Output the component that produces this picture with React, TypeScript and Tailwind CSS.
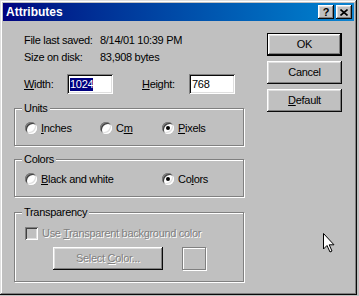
import type { ReactNode } from "react";

const bevel =
  "shadow-[inset_-1px_-1px_0_#0a0a0a,inset_1px_1px_0_#ffffff,inset_-2px_-2px_0_#808080,inset_2px_2px_0_#dfdfdf]";
const sunken =
  "shadow-[inset_1px_1px_0_#808080,inset_-1px_-1px_0_#ffffff,inset_2px_2px_0_#0a0a0a,inset_-2px_-2px_0_#dfdfdf]";
const disabledText = "text-[#808080] [text-shadow:1px_1px_0_#ffffff]";

function CaptionButton({ children }: { children: ReactNode }) {
  return (
    <div className={`flex h-[14px] w-[16px] items-center justify-center bg-[#c0c0c0] text-[11px] font-bold leading-none text-black ${bevel}`}>
      {children}
    </div>
  );
}

function Button({ children, isDefault, disabled, className = "" }: { children: ReactNode; isDefault?: boolean; disabled?: boolean; className?: string }) {
  return (
    <div className={`h-[23px] ${isDefault ? "border border-black" : ""} ${className}`}>
      <div className={`flex h-full w-full items-center justify-center bg-[#c0c0c0] ${bevel} ${disabled ? disabledText : ""}`}>
        <span>{children}</span>
      </div>
    </div>
  );
}

function Field({ children, selected }: { children: ReactNode; selected?: boolean }) {
  return (
    <div className={`flex h-[20px] w-[46px] items-center bg-white pl-[3px] ${sunken}`}>
      <span className={selected ? "bg-[#000080] text-white" : ""}>{children}</span>
    </div>
  );
}

function Radio({ checked }: { checked?: boolean }) {
  return (
    <span className="flex size-[12px] shrink-0 items-center justify-center rounded-full bg-white shadow-[inset_1px_1px_0_#808080,inset_-1px_-1px_0_#ffffff,inset_2px_2px_0_#404040,inset_-2px_-2px_0_#dfdfdf]">
      {checked && <span className="size-[4px] rounded-full bg-black" />}
    </span>
  );
}

function Option({ children, checked, className = "" }: { children: ReactNode; checked?: boolean; className?: string }) {
  return (
    <div className={`flex items-center gap-[4px] ${className}`}>
      <Radio checked={checked} />
      <span>{children}</span>
    </div>
  );
}

function Group({ label, className = "", children }: { label: string; className?: string; children: ReactNode }) {
  return (
    <div className={`border border-[#808080] shadow-[1px_1px_0_#ffffff,inset_1px_1px_0_#ffffff] ${className}`}>
      <div className="-mt-[7px] ml-[7px] w-fit bg-[#c0c0c0] px-[2px] leading-[13px]">{label}</div>
      {children}
    </div>
  );
}

export default function App() {
  return (
    <div className="relative h-[296px] w-[359px] bg-[#c0c0c0] font-['Liberation_Sans',Arial,sans-serif] text-[11px] leading-[13px] tracking-[-0.3px] text-black">
      <div className="h-[295px] w-[357px] p-[3px] shadow-[inset_-1px_-1px_0_#0a0a0a,inset_1px_1px_0_#dfdfdf,inset_-2px_-2px_0_#808080,inset_2px_2px_0_#ffffff]">
        {/* title bar */}
        <div className="flex h-[18px] items-center justify-between bg-gradient-to-r from-[#000080] to-[#1084d0] pl-[3px] pr-[2px]">
          <span className="text-[12px] font-bold tracking-normal text-white">Attributes</span>
          <div className="flex gap-[2px]">
            <CaptionButton>?</CaptionButton>
            <CaptionButton>
              <svg width="8" height="7" viewBox="0 0 8 7">
                <path d="M0.5 0.5 L7.5 6.5 M7.5 0.5 L0.5 6.5" stroke="black" strokeWidth="1.6" />
              </svg>
            </CaptionButton>
          </div>
        </div>

        <div className="flex">
          {/* left column */}
          <div className="ml-[11px] w-[230px]">
            <div className="mt-[11px] pl-[10px]">
              <div className="flex h-[17px] items-center">
                <span className="w-[76px]">File last saved:</span>
                <span>8/14/01 10:39 PM</span>
              </div>
              <div className="flex h-[17px] items-center">
                <span className="w-[76px]">Size on disk:</span>
                <span>83,908 bytes</span>
              </div>
              <div className="mt-[8px] flex h-[20px] items-center">
                <span className="w-[43px]"><span className="underline">W</span>idth:</span>
                <Field selected>1024</Field>
                <span className="ml-[29px] w-[47px]"><span className="underline">H</span>eight:</span>
                <Field>768</Field>
              </div>
            </div>

            <Group label="Units" className="mt-[14px] h-[38px]">
              <div className="mt-[5px] flex h-[16px] items-center pl-[10px]">
                <Option className="w-[75px]"><span className="underline">I</span>nches</Option>
                <Option className="w-[62px]">C<span className="underline">m</span></Option>
                <Option checked><span className="underline">P</span>ixels</Option>
              </div>
            </Group>

            <Group label="Colors" className="mt-[13px] h-[38px]">
              <div className="mt-[5px] flex h-[16px] items-center pl-[10px]">
                <Option className="w-[137px]"><span className="underline">B</span>lack and white</Option>
                <Option checked>Co<span className="underline">l</span>ors</Option>
              </div>
            </Group>

            <Group label="Transparency" className="mt-[15px] h-[70px]">
              <div className="mt-[8px] flex h-[13px] items-center gap-[4px] pl-[10px]">
                <span className="size-[13px] shrink-0 bg-[#c0c0c0] shadow-[inset_1px_1px_0_#808080,inset_-1px_-1px_0_#ffffff,inset_2px_2px_0_#404040,inset_-2px_-2px_0_#dfdfdf]" />
                <span className={disabledText}>Use <span className="underline">T</span>ransparent background color</span>
              </div>
              <div className="mt-[7px] flex pl-[38px]">
                <Button disabled className="w-[110px]">Select <span className="underline">C</span>olor...</Button>
                <div className="ml-[19px] h-[23px] w-[24px] border border-[#808080] shadow-[1px_1px_0_#ffffff,inset_1px_1px_0_#ffffff]" />
              </div>
            </Group>
          </div>

          {/* right column */}
          <div className="ml-[23px] mt-[12px] flex flex-col gap-[5px]">
            <Button isDefault className="w-[75px]">OK</Button>
            <Button className="w-[75px]">Cancel</Button>
            <Button className="w-[75px]"><span className="underline">D</span>efault</Button>
          </div>
        </div>
      </div>

      {/* mouse pointer */}
      <svg className="absolute left-[323px] top-[233px]" width="13" height="20" viewBox="0 0 13 20">
        <path d="M0.5 0.5 L0.5 16 L4 12.5 L7 19 L9 18 L6.2 11.8 L11 11.8 Z" fill="white" stroke="black" strokeWidth="1" />
      </svg>
    </div>
  );
}
